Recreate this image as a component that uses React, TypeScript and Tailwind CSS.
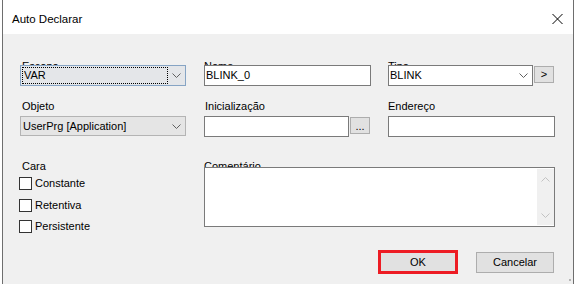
import React from "react";

function Chevron({ color = "#606060" }: { color?: string }) {
  return (
    <svg width="9" height="5" viewBox="0 0 9 5" className="block">
      <path d="M0.5 0.5 L4.5 4.5 L8.5 0.5" fill="none" stroke={color} strokeWidth="1" />
    </svg>
  );
}

function ChevronUp({ color = "#c2c2c2" }: { color?: string }) {
  return (
    <svg width="9" height="5" viewBox="0 0 9 5" className="block">
      <path d="M0.5 4.5 L4.5 0.5 L8.5 4.5" fill="none" stroke={color} strokeWidth="1" />
    </svg>
  );
}

function Check({ label, className = "" }: { label: string; className?: string }) {
  return (
    <div className={"flex items-center h-[13px] -ml-[1px] " + className}>
      <div className="w-[13px] h-[13px] border border-[#333333] bg-white shrink-0" />
      <span className="ml-[3px] leading-[13px]">{label}</span>
    </div>
  );
}

export default function App() {
  return (
    <div className="w-[575px] h-[284px] bg-white flex font-['Liberation_Sans',Arial,sans-serif] text-[11px] text-black overflow-hidden">
      <div className="w-[2px] shrink-0" />
      <div className="w-[1px] bg-[#6e6e6e] shrink-0" />
      <div className="flex-1 flex flex-col min-w-0">
        {/* Title bar */}
        <div className="h-[34px] bg-white flex items-start justify-between pl-[9px] pr-[10px] shrink-0">
          <div className="pt-[13px] text-[11.5px] leading-[13px]">Auto Declarar</div>
          <div className="mt-[14px]">
            <svg width="11" height="10" viewBox="0 0 11 10" className="block">
              <path d="M0.5 0 L10.5 10 M10.5 0 L0.5 10" stroke="#000" strokeWidth="1" />
            </svg>
          </div>
        </div>

        {/* Body */}
        <div className="flex-1 bg-[#f0f0f0] relative flex flex-col pl-[17px] pt-[26px]">
          {/* Row 1 */}
          <div className="flex items-start">
            <div className="w-[166px] flex flex-col">
              <div className="pl-[2px] h-[13px] leading-[13px]">Escopo</div>
              <div className="relative z-10 -mt-[8px] h-[21px] border border-[#86a4c4] bg-[#e4e6e9] flex p-[1px]">
                <div className="w-[146px] border border-dotted border-black flex items-center pl-[1px] leading-[13px]">VAR</div>
                <div className="flex-1 flex items-center justify-center">
                  <Chevron />
                </div>
              </div>
            </div>
            <div className="ml-[18px] w-[167px] flex flex-col">
              <div className="h-[13px] leading-[13px]">Nome</div>
              <div className="relative z-10 -mt-[8px] h-[21px] border border-[#7a7a7a] bg-white flex items-center pl-[1px] leading-[13px]">
                BLINK_0
              </div>
            </div>
            <div className="ml-[17px] flex flex-col">
              <div className="h-[13px] leading-[13px]">Tipo</div>
              <div className="relative z-10 -mt-[8px] flex items-start">
                <div className="w-[145px] h-[21px] border border-[#7a7a7a] bg-white flex items-center">
                  <div className="flex-1 pl-[1px] leading-[13px]">BLINK</div>
                  <div className="w-[17px] flex items-center justify-center">
                    <Chevron />
                  </div>
                </div>
                <div className="ml-[1px] mt-[1px] w-[20px] h-[17px] border border-[#adadad] bg-[#e1e1e1] flex items-center justify-center leading-[13px]">
                  &gt;
                </div>
              </div>
            </div>
          </div>

          {/* Row 2 */}
          <div className="flex items-start mt-[14px]">
            <div className="w-[166px] flex flex-col">
              <div className="pl-[2px] h-[13px] leading-[13px]">Objeto</div>
              <div className="mt-[3px] h-[20px] border border-[#b4b4b4] bg-[#e5e5e5] flex items-center">
                <div className="flex-1 pl-[2px] leading-[13px]">UserPrg [Application]</div>
                <div className="w-[17px] flex items-center justify-center">
                  <Chevron />
                </div>
              </div>
            </div>
            <div className="ml-[18px] w-[167px] flex flex-col">
              <div className="pl-[1px] h-[13px] leading-[13px]">Inicialização</div>
              <div className="mt-[3px] flex items-start">
                <div className="w-[145px] h-[21px] border border-[#7a7a7a] bg-white" />
                <div className="ml-[1px] mt-[1px] w-[20px] h-[17px] border border-[#adadad] bg-[#e1e1e1] flex items-end justify-center pb-[2px] leading-[10px]">
                  ...
                </div>
              </div>
            </div>
            <div className="ml-[17px] flex flex-col">
              <div className="h-[13px] leading-[13px]">Endereço</div>
              <div className="mt-[3px] w-[167px] h-[21px] border border-[#7a7a7a] bg-white" />
            </div>
          </div>

          {/* Row 3 */}
          <div className="flex items-start mt-[23px]">
            <div className="w-[166px] flex flex-col">
              <div className="pl-[2px] h-[13px] leading-[13px]">Cara</div>
              <Check label="Constante" className="mt-[4px]" />
              <Check label="Retentiva" className="mt-[9px]" />
              <Check label="Persistente" className="mt-[8px]" />
            </div>
            <div className="ml-[18px] flex flex-col">
              <div className="h-[13px] leading-[13px]">Comentário</div>
              <div className="relative z-10 -mt-[6px] w-[351px] h-[60px] border border-[#7a7a7a] bg-white flex">
                <div className="flex-1" />
                <div className="w-[17px] my-[1px] bg-[#f0f0f0] flex flex-col items-center justify-between pt-[8px] pb-[7px]">
                  <ChevronUp />
                  <Chevron color="#c2c2c2" />
                </div>
              </div>
            </div>
          </div>

          {/* Footer */}
          <div className="mt-auto pb-[10px] pr-[19px] flex justify-end items-start">
            <div className="w-[80px] h-[24px] border-[3px] border-[#ed1c24] bg-[#e1e1e1] flex items-center justify-center leading-[13px]">
              OK
            </div>
            <div className="ml-[18px] mt-[2px] w-[78px] h-[21px] border border-[#adadad] bg-[#e1e1e1] flex items-center justify-center leading-[13px]">
              Cancelar
            </div>
          </div>

          <div className="absolute right-[2px] bottom-[3px] w-[2px] h-[2px] bg-[#b4b4b4]" />
        </div>
      </div>
      <div className="w-[1px] bg-[#6e6e6e] shrink-0" />
      <div className="w-[1px] bg-white shrink-0" />
    </div>
  );
}
